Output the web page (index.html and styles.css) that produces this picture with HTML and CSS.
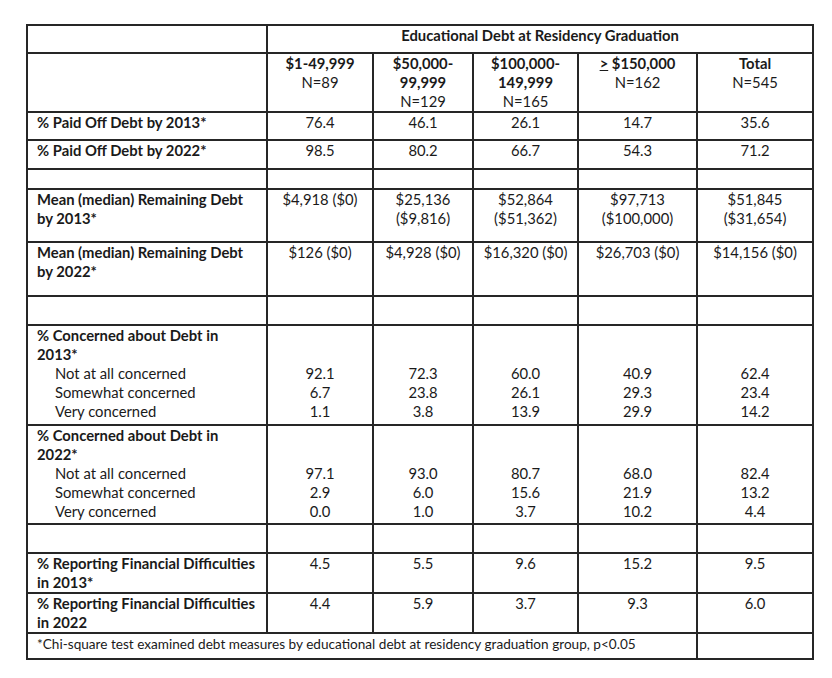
FILE: index.html
```html
<!DOCTYPE html>
<html>
<head>
<meta charset="utf-8">
<link rel="stylesheet" href="styles.css">
</head>
<body>
<table class="tbl">
  <colgroup>
    <col class="c-label">
    <col class="c-1">
    <col class="c-2">
    <col class="c-3">
    <col class="c-4">
    <col class="c-5">
  </colgroup>
  <tr class="r28">
    <td></td>
    <td colspan="5" class="ctr b">Educational Debt at Residency Graduation</td>
  </tr>
  <tr class="r59">
    <td></td>
    <td class="ctr"><div class="b">$1-49,999</div><div>N=89</div></td>
    <td class="ctr"><div class="b">$50,000-</div><div class="b">99,999</div><div>N=129</div></td>
    <td class="ctr"><div class="b">$100,000-</div><div class="b">149,999</div><div>N=165</div></td>
    <td class="ctr"><div class="b"><span class="ul">&gt;</span> $150,000</div><div>N=162</div></td>
    <td class="ctr"><div class="b">Total</div><div>N=545</div></td>
  </tr>
  <tr class="r28">
    <td class="b">% Paid Off Debt by 2013*</td>
    <td class="ctr">76.4</td><td class="ctr">46.1</td><td class="ctr">26.1</td><td class="ctr">14.7</td><td class="ctr">35.6</td>
  </tr>
  <tr class="r29">
    <td class="b">% Paid Off Debt by 2022*</td>
    <td class="ctr">98.5</td><td class="ctr">80.2</td><td class="ctr">66.7</td><td class="ctr">54.3</td><td class="ctr">71.2</td>
  </tr>
  <tr class="r20"><td></td><td></td><td></td><td></td><td></td><td></td></tr>
  <tr class="r53">
    <td class="b">Mean (median) Remaining Debt by 2013*</td>
    <td class="ctr">$4,918 ($0)</td>
    <td class="ctr">$25,136 ($9,816)</td>
    <td class="ctr">$52,864 ($51,362)</td>
    <td class="ctr">$97,713 ($100,000)</td>
    <td class="ctr">$51,845 ($31,654)</td>
  </tr>
  <tr class="r54">
    <td class="b">Mean (median) Remaining Debt by 2022*</td>
    <td class="ctr">$126 ($0)</td>
    <td class="ctr">$4,928 ($0)</td>
    <td class="ctr">$16,320 ($0)</td>
    <td class="ctr">$26,703 ($0)</td>
    <td class="ctr">$14,156 ($0)</td>
  </tr>
  <tr class="r29"><td></td><td></td><td></td><td></td><td></td><td></td></tr>
  <tr class="r100">
    <td><div class="b">% Concerned about Debt in 2013*</div><div class="ind">Not at all concerned</div><div class="ind">Somewhat concerned</div><div class="ind">Very concerned</div></td>
    <td class="ctr lead2"><div>92.1</div><div>6.7</div><div>1.1</div></td>
    <td class="ctr lead2"><div>72.3</div><div>23.8</div><div>3.8</div></td>
    <td class="ctr lead2"><div>60.0</div><div>26.1</div><div>13.9</div></td>
    <td class="ctr lead2"><div>40.9</div><div>29.3</div><div>29.9</div></td>
    <td class="ctr lead2"><div>62.4</div><div>23.4</div><div>14.2</div></td>
  </tr>
  <tr class="r99">
    <td><div class="b">% Concerned about Debt in 2022*</div><div class="ind">Not at all concerned</div><div class="ind">Somewhat concerned</div><div class="ind">Very concerned</div></td>
    <td class="ctr lead2"><div>97.1</div><div>2.9</div><div>0.0</div></td>
    <td class="ctr lead2"><div>93.0</div><div>6.0</div><div>1.0</div></td>
    <td class="ctr lead2"><div>80.7</div><div>15.6</div><div>3.7</div></td>
    <td class="ctr lead2"><div>68.0</div><div>21.9</div><div>10.2</div></td>
    <td class="ctr lead2"><div>82.4</div><div>13.2</div><div>4.4</div></td>
  </tr>
  <tr class="r29"><td></td><td></td><td></td><td></td><td></td><td></td></tr>
  <tr class="r40">
    <td class="b">% Reporting Financial Difficulties in 2013*</td>
    <td class="ctr">4.5</td><td class="ctr">5.5</td><td class="ctr">9.6</td><td class="ctr">15.2</td><td class="ctr">9.5</td>
  </tr>
  <tr class="r40">
    <td class="b">% Reporting Financial Difficulties in 2022</td>
    <td class="ctr">4.4</td><td class="ctr">5.9</td><td class="ctr">3.7</td><td class="ctr">9.3</td><td class="ctr">6.0</td>
  </tr>
  <tr class="r26">
    <td colspan="5" class="note">*Chi-square test examined debt measures by educational debt at residency graduation group, p&lt;0.05</td>
    <td></td>
  </tr>
</table>
</body>
</html>
```
FILE: styles.css
```css
html, body {
  margin: 0;
  padding: 0;
  background: #ffffff;
}

body {
  font-family: "Lato", "Liberation Sans", sans-serif;
  font-size: 14.8px;
  line-height: 19px;
  color: #1a1a1a;
}

.tbl {
  margin: 24px 0 0 26px;
  border-collapse: collapse;
  table-layout: fixed;
  width: 786px;
}

.c-label { width: 240px; }
.c-1 { width: 106px; }
.c-2 { width: 100px; }
.c-3 { width: 105px; }
.c-4 { width: 119px; }
.c-5 { width: 116px; }

.tbl td {
  border: 2px solid #262626;
  padding: 0 9px;
  vertical-align: top;
}

.ctr { text-align: center; }
.b { font-weight: 700; }
.ind { padding-left: 18px; }
.tbl td.lead2 { padding-top: 38px; }
.ul { text-decoration: underline; }

.note {
  font-size: 13.6px;
  line-height: 20px;
}

.r20 { height: 20px; }
.r26 { height: 26px; }
.r28 { height: 28px; }
.r29 { height: 29px; }
.r40 { height: 40px; }
.r53 { height: 53px; }
.r54 { height: 54px; }
.r59 { height: 59px; }
.r99 { height: 99px; }
.r100 { height: 100px; }
```
